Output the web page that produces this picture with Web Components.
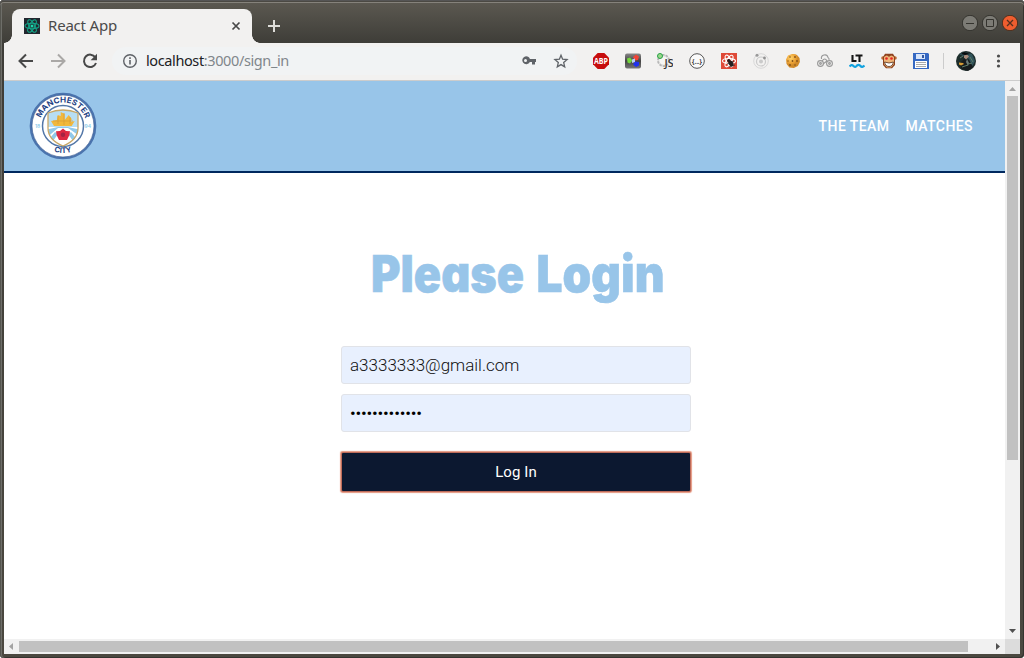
<!DOCTYPE html>
<html lang="en">
<head>
<meta charset="utf-8">
<title>React App</title>
<style>
html,body{margin:0;height:100%;overflow:hidden;background:#fff}
</style>
</head>
<body>
<browser-window></browser-window>
<script>
const define = (name, html) => customElements.define(name, class extends HTMLElement {
  constructor() {
    super();
    const t = document.createElement('template');
    t.innerHTML = html;
    this.attachShadow({mode: 'open'}).append(t.content.cloneNode(true));
  }
});

const ICONS = {
  back: [18, '<g fill="none" stroke="#484848" stroke-width="2"><path d="M16 9H3M9 2.500 2.500 9 9 15.500"/></g>'],
  forward: [18, '<g fill="none" stroke="#aaa8a6" stroke-width="2"><path d="M2 9h13M9 2.500 15.500 9 9 15.500"/></g>'],
  reload: [18, '<path d="M14.300 5.300A6.200 6.200 0 1 0 15 11" fill="none" stroke="#484848" stroke-width="2"/><path d="M16 1.800v6.400H9.600z" fill="#484848"/>'],
  info: [16, '<circle cx="8" cy="8" r="6.300" fill="none" stroke="#5f6368" stroke-width="1.400"/><path d="M7.200 7h1.600v4.500H7.200zM7.200 4.200h1.600v1.700H7.200z" fill="#5f6368"/>'],
  key: [16, '<path fill="#5f6368" fill-rule="evenodd" d="M5 3.300a4 4 0 0 1 3.900 2.800H15v3h-1V11.500h-3V9.100H8.900A4 4 0 1 1 5 3.300zm-.5 2.800a1.500 1.500 0 1 0 0 3 1.500 1.500 0 0 0 0-3z"/>'],
  star: [16, '<path fill="none" stroke="#5f6368" stroke-width="1.300" d="m8 2.200 1.600 4 4.500.4-3.400 3 1 4.300L8 11.600l-3.700 2.300 1-4.300-3.400-3 4.500-.4z"/>'],
  abp: [16, '<path d="M4.700 0h6.600L16 4.700v6.600L11.300 16H4.700L0 11.300V4.700z" fill="#c70d0d"/><text x="8" y="11" text-anchor="middle" textLength="14" lengthAdjust="spacingAndGlyphs" font-family="Open Sans,sans-serif" font-weight="700" font-size="8" fill="#fff">ABP</text>'],
  swatch: [16, '<defs><linearGradient id="g" x2="0" y2="1"><stop stop-color="#888"/><stop offset=".5" stop-color="#444"/><stop offset="1" stop-color="#777"/></linearGradient></defs><rect y=".5" width="16" height="15" rx="2" fill="url(#g)"/><path d="m11 1.500 3 2-1 3.500-3 .5-2-3.500z" fill="#f04436"/><path d="m2 5.500 3-1 2.500 3-2.500 3-2.500-1z" fill="#75d83e"/><path d="m10 8.500 4 .5v3.500l-3 1.500-3-2.500z" fill="#2032ef"/><path d="m7 6.500 3-1v3.500l-3 1z" fill="#bacbf7"/>'],
  js: [16, '<circle cx="6.500" cy="7.500" r="5.300" fill="none" stroke="#b4b4b4" stroke-width="2.200" stroke-dasharray="2.300 1"/><circle cx="6.500" cy="7.500" r="4.700" fill="#f6f6f4" stroke="#c4c4c4" stroke-width=".6"/><circle cx="3" cy="3" r="2.500" fill="#9cd88c" stroke="#27a147"/><text x="7.500" y="14" font-family="Open Sans,sans-serif" font-weight="600" font-size="10" textLength="9" lengthAdjust="spacingAndGlyphs" fill="#333">JS</text>'],
  json: [16, '<circle cx="8" cy="8" r="7.300" fill="#fafafa" stroke="#555"/><text x="8" y="10.500" text-anchor="middle" font-family="Open Sans,sans-serif" font-size="7.500" font-weight="700" textLength="10" lengthAdjust="spacingAndGlyphs" fill="#333">{...}</text>'],
  react: [16, '<path d="M0 0h16v16H0z" fill="#df4937"/><g fill="none" stroke="#fff" stroke-width="1.100"><ellipse cx="8" cy="8" rx="6.500" ry="2.500"/><ellipse cx="8" cy="8" rx="6.500" ry="2.500" transform="rotate(60 8 8)"/><ellipse cx="8" cy="8" rx="6.500" ry="2.500" transform="rotate(120 8 8)"/></g><ellipse cx="10" cy="10.500" rx="2.300" ry="3" transform="rotate(-35 10 10.500)" fill="#252020"/><circle cx="7.700" cy="7.500" r="1.500" fill="#252020"/><path d="m6 11 7-3M8 14l6-2" stroke="#252020" stroke-width=".7"/>'],
  orbit: [16, '<circle cx="8" cy="8" r="7.300" fill="none" stroke="#d8d8d8"/><circle cx="8" cy="8.500" r="4.500" fill="none" stroke="#cacaca" stroke-width="1.200"/><circle cx="8" cy="8.500" r="2" fill="#cacaca"/><circle cx="4" cy="2.200" r="1.500" fill="#999"/><circle cx="11.500" cy="5" r="1.400" fill="#929292"/>'],
  cookie: [16, '<defs><radialGradient id="g" cx=".35" cy=".3"><stop stop-color="#ffd36c"/><stop offset=".7" stop-color="#eca235"/><stop offset="1" stop-color="#d08a2a"/></radialGradient></defs><path d="M7 1q3-.5 5 1l2.500 3 .4 4-2 4-4 2-4.500-.4L1.600 11 1 6.500l2-4z" fill="url(#g)"/><g fill="#81501b"><circle cx="5" cy="4" r=".8"/><circle cx="10" cy="4" r=".9"/><circle cx="3" cy="8" r=".7"/><circle cx="7.500" cy="8" r=".9"/><circle cx="12" cy="8" r=".9"/><circle cx="5" cy="12" r=".9"/><circle cx="10" cy="12" r=".8"/></g>'],
  clouds: [16, '<g fill="none" stroke="#999" stroke-width="1.100"><path d="M4.500 6a3.300 3.300 0 0 1 6.500-1.500q1.500 1 1 2.500"/><circle cx="3.500" cy="10.500" r="2.900"/><circle cx="12.500" cy="10.500" r="2.900"/><path d="M5 8q3-4 5 0l-4 3"/><circle cx="3.500" cy="10.500" r=".9"/><circle cx="12.500" cy="10.500" r=".9"/></g>'],
  lt: [16, '<path d="M3.500 2v6h4M6.500 2.500h7M10.500 2.500V9" fill="none" stroke="#151515" stroke-width="2.100"/><path d="M.5 13.500q2-2.500 4-.5t3.500-.5q2-1.500 3.500.5t4-.5" fill="none" stroke="#12a2df" stroke-width="2.200"/>'],
  monkey: [16, '<circle cx="2" cy="5" r="1.800" fill="#ba6b33"/><circle cx="14" cy="5" r="1.800" fill="#ba6b33"/><path d="M2 4 4 .7h8L14 4v8l-3 3.300H5L2 12z" fill="#8d421f"/><path d="M3 4q3-3 5 0 2-3 5 0v7l-3 3.500H6L3 11z" fill="#efb477"/><circle cx="5.500" cy="5.500" r="1.300" fill="#e82625"/><circle cx="10.500" cy="5.500" r="1.300" fill="#e82625"/><path d="M3.500 9q4.500 2 9 0-1 4.500-4.500 4.500T3.500 9z" fill="#fff" stroke="#53301e" stroke-width=".8"/>'],
  floppy: [16, '<path d="M0 0h15l1 1v15H0z" fill="#3568c2"/><path d="M3 1h9v5H3z" fill="#d7e5fa"/><path d="M9 2h2v3H9z" fill="#3157a1"/><path d="M2 8h12v7H2z" fill="#fff"/><path d="M3 9.500h10M3 11.500h10M3 13.500h10" stroke="#aaa"/>'],
  avatar: [20, '<circle cx="10" cy="10" r="10" fill="#1d2d2b"/><path d="m3 3 5-2 8 2 3 7-3 6-3-8z" fill="#31545b"/><path d="M3 13 8 8l5 1 4 7-5 4-6-2z" fill="#161b1d"/><path d="m8 4.500 3-1 2 2-3 3-2-2z" fill="#aa8c7c"/><path d="m3 11.500 4 .5 1 1-3 1.500-2-1z" fill="#d59c36"/><path d="m11 8 2 4-1 3-2-4z" fill="#6c7b79"/><path d="m5 3 3-2 6 2-5 1z" fill="#080b0c"/><path d="m12 13 4-1M6 16l6-2M14 6l3 5M4 7l3-2" stroke="#5d7b68"/>'],
  dots: [16, '<g fill="#4b4b4b"><circle cx="8.500" cy="3" r="1.600"/><circle cx="8.500" cy="8" r="1.600"/><circle cx="8.500" cy="13" r="1.600"/></g>'],
  favicon: [16, '<path d="M0 0h16v16H0z" fill="#22272f"/><g fill="none" stroke="#13a487" stroke-width="1.100"><ellipse cx="8" cy="8" rx="7" ry="2.700"/><ellipse cx="8" cy="8" rx="7" ry="2.700" transform="rotate(60 8 8)"/><ellipse cx="8" cy="8" rx="7" ry="2.700" transform="rotate(120 8 8)"/></g><circle cx="8" cy="8" r="1.500" fill="#1bd8ad"/>'],
  close: [10, '<path d="m1.500 1.500 7 7m0-7-7 7" stroke="#484848" stroke-width="1.700"/>'],
  plus: [14, '<path d="M7 1v12M1 7h12" stroke="#deddd9" stroke-width="2"/>']
};
customElements.define('ui-icon', class extends HTMLElement {
  connectedCallback() {
    const [s, body] = ICONS[this.getAttribute('name')];
    this.attachShadow({mode: 'open'}).innerHTML =
      `<style>:host{display:flex;align-items:center;justify-content:center;flex:none}svg{display:block}</style><svg width="${s}" height="${s}" viewBox="0 0 ${s} ${s}">${body}</svg>`;
  }
});

define('window-controls', `<style>:host{display:flex;gap:4px}svg{display:block}</style>
<svg width="16" height="16"><circle cx="8" cy="8" r="7.700" fill="#7c7b75" stroke="#34332e"/><path d="M4 8.500h8" stroke="#34332e"/></svg>
<svg width="16" height="16"><circle cx="8" cy="8" r="7.700" fill="#7c7b75" stroke="#34332e"/><path d="M4.500 4.500h7v7h-7z" fill="none" stroke="#34332e"/></svg>
<svg width="16" height="16"><circle cx="8" cy="8" r="7.700" fill="#ef5d2f" stroke="#49301f"/><path d="m5 5 6 6m0-6-6 6" stroke="#54301f" stroke-width="1.300"/></svg>`);

define('tab-strip', `<style>
:host{display:flex;height:43px;box-sizing:border-box;padding:9px 2px 0 8px;position:relative}
.tab{position:relative;width:240px;box-sizing:border-box;height:34px;background:#f2f1f0;border-radius:8px 8px 0 0;display:flex;align-items:center;padding:0 11px 0 12px;font:15px/20px "Noto Sans",sans-serif;color:#4a4a4a}
.tab:before,.tab:after{content:"";position:absolute;bottom:0;width:8px;height:8px}
.tab:before{left:-8px;background:radial-gradient(circle at 0 0,transparent 7.500px,#f2f1f0 8px)}
.tab:after{right:-8px;background:radial-gradient(circle at 100% 0,transparent 7.500px,#f2f1f0 8px)}
.t{margin-left:8px;flex:1;letter-spacing:-.2px;padding-bottom:2px}
.plus{margin:0 auto 0 15px;height:34px}
window-controls{margin-top:6px}
</style><div class="tab"><ui-icon name="favicon"></ui-icon><span class="t">React App</span><ui-icon name="close"></ui-icon></div><ui-icon class="plus" name="plus"></ui-icon><window-controls></window-controls>`);

define('tool-bar', `<style>
:host{display:flex;align-items:center;height:38px;box-sizing:border-box;background:#f2f1f0;border-bottom:1px solid #ccc;padding:0 6px 1px}
ui-icon{width:32px}
.pill{margin:0 8px 0 6px;width:465px;height:28px;border-radius:14px;background:#f1f3f4;display:flex;align-items:center;font:14.500px/20px "Noto Sans",sans-serif;color:#80868b}
.pill ui-icon:first-child{width:16px;margin:0 8px 0 10px}
.url{flex:1;letter-spacing:-.39px;padding-bottom:2px}b{font-weight:400;color:#202124}
.sep{width:1px;height:16px;background:#ccc;margin:0 6px}
</style><ui-icon name="back"></ui-icon><ui-icon name="forward"></ui-icon><ui-icon name="reload"></ui-icon>
<div class="pill"><ui-icon name="info"></ui-icon><span class="url"><b>localhost</b>:3000/sign_in</span><ui-icon name="key"></ui-icon><ui-icon name="star"></ui-icon></div>
${['abp','swatch','js','json','react','orbit','cookie','clouds','lt','monkey','floppy'].map(n => `<ui-icon name="${n}"></ui-icon>`).join('')}
<span class="sep"></span><ui-icon name="avatar"></ui-icon><ui-icon name="dots"></ui-icon>`);

define('club-crest', `<style>:host{display:block}svg{display:block}</style>
<svg width="68" height="68" viewBox="0 0 68 68">
<defs><path id="top" d="M10.500 34a23.500 23.500 0 0 1 47 0"/><path id="bot" d="M7 34a27 27 0 0 0 54 0"/><clipPath id="c"><path d="M19 21q15-6 30 0v15q0 12-15 18-15-6-15-18z"/></clipPath></defs>
<circle cx="34" cy="34" r="32.200" fill="#fff" stroke="#4b74ae" stroke-width="2.300"/><circle cx="34" cy="34" r="31" fill="none" stroke="#284c86" stroke-width=".6"/>
<circle cx="34" cy="34" r="20.500" fill="#fff" stroke="#5377a8" stroke-width="1.500"/>
<g clip-path="url(#c)"><path d="M16 14h36v22H16z" fill="#b7def4"/><path d="M16 35h36v22H16z" fill="#fff"/><path d="m16 38 13-3h10l13 3v7L39 36H29L16 47zm0 14 10-12 3 2-10 14zm36 0L42 40l-3 2 10 14z" fill="#91c9ea"/></g>
<path d="M19 21q15-6 30 0v15q0 12-15 18-15-6-15-18z" fill="none" stroke="#c9a766" stroke-width="1.300"/>
<path d="m22 29 6-1 .7-5 3 1v-4l4 2v6l4-5 3 4-1 3 4-1-3 5H25z" fill="#f1b83c"/><path d="M24 29h20M29 24v8M35 21v12M41 25v7" stroke="#d59b34" stroke-width=".7"/>
<path d="m34 36.500 3 2.500 4 .3-.7 4L38 48h-8l-2.300-4.700-.7-4 4-.3z" fill="#dd2943"/><circle cx="34" cy="42.800" r="2.200" fill="#a52343"/>
<g fill="#1f4385" font-family="Inter,sans-serif" font-weight="700"><text font-size="7.800" textLength="58" lengthAdjust="spacingAndGlyphs"><textPath href="#top" startOffset="7.900">MANCHESTER</textPath></text><text font-size="7.600" text-anchor="middle"><textPath href="#bot" startOffset="50%">CITY</textPath></text></g>
<g fill="#8ccbea" font-family="Inter,sans-serif" font-weight="600" font-size="5"><text x="6" y="36">18</text><text x="55.500" y="36">94</text></g>
</svg>`);

define('site-header', `<style>
:host{display:flex;height:92px;box-sizing:border-box;background:#98c5e9;border-bottom:2px solid #00285e;align-items:center;justify-content:space-between;padding:0 32px 0 25px}
nav{display:flex;gap:16px;font:500 14px/20px Roboto,sans-serif;color:#fff;letter-spacing:.42px}
</style><club-crest></club-crest><nav><span>THE TEAM</span><span>MATCHES</span></nav>`);

define('text-field', `<style>:host{display:flex;align-items:center;box-sizing:border-box;width:350px;height:38px;border:1px solid #e1e3e8;border-radius:3px;background:#e8f0fe;padding:0 8px 0 8.500px;color:#111;font:300 17px/20px Roboto,sans-serif}</style><slot></slot>`);
define('submit-button', `<style>:host{display:flex;align-items:center;justify-content:center;box-sizing:border-box;width:348px;height:38px;padding:0 0 0 1px;border-radius:1px;background:#0c1830;color:#fff;font:400 15px/20px Roboto,sans-serif;letter-spacing:.08px;box-shadow:0 0 0 1px #bd6b5a,0 0 1px 1.500px #e59780}</style><slot></slot>`);

define('login-page', `<style>
:host{display:flex;flex-direction:column;align-items:center;box-sizing:border-box;padding:67px 0 0 23px}
.h{display:block;width:320px;height:70px;overflow:visible}
form{display:flex;flex-direction:column;gap:10px;margin:36px 0 0 -1px}
submit-button{margin:11px 1px 0}
.pw{font-weight:400;color:#000;letter-spacing:-.22px}
</style>
<svg class="h" viewBox="0 0 320 70"><text y="52" font-family="Inter,sans-serif" font-size="51" font-weight="900" style="font-feature-settings:'cv11'" fill="#98c5e9" stroke="#98c5e9" stroke-width=".6"><tspan x="15" textLength="153" lengthAdjust="spacingAndGlyphs">Please</tspan> <tspan x="180.500" textLength="128" lengthAdjust="spacingAndGlyphs">Login</tspan></text></svg>
<form><text-field>a3333333@gmail.com</text-field><text-field class="pw">•••••••••••••</text-field><submit-button>Log In</submit-button></form>`);

define('scroll-y', `<style>:host{display:flex;flex-direction:column;background:#f1f1f1;width:15px;align-items:center}i{width:11px;height:364px;background:#c1c1c1}svg{display:block}.g{flex:1}</style><svg width="15" height="15"><path d="M4 10h7L7.500 6z" fill="#a3a3a3"/></svg><i></i><span class="g"></span><svg width="15" height="16"><path d="M4 6h7l-3.500 4z" fill="#505050"/></svg>`);
define('scroll-x', `<style>:host{display:flex;background:#f1f1f1;height:15px;align-items:center}i{width:949px;height:11px;background:#c1c1c1}svg{display:block}.g{flex:1}</style><svg width="15" height="15"><path d="M9 4v7L5 7.500z" fill="#a3a3a3"/></svg><i></i><span class="g"></span><svg width="15" height="15"><path d="M6 4v7l4-3.500z" fill="#505050"/></svg>`);

define('browser-window', `<style>
:host{display:flex;flex-direction:column;width:1024px;height:658px;box-sizing:border-box;padding:0 4px 4px;background:linear-gradient(#5d5a52,#3e3d38 43px,#4b4840 100%);border-radius:4px;overflow:hidden;box-shadow:inset 0 1px #555,inset 0 2px #4b4943,inset 0 3px #85827b,inset 1px 0 #55554f,inset 2px 0 #6e6e69,inset -1px -1px #35342f}
.view{display:grid;grid-template:558px 15px/1001px 15px;background:#fff}
.doc{overflow:hidden}.corner{background:#dcdcdc}
</style><tab-strip></tab-strip><tool-bar></tool-bar>
<div class="view"><div class="doc"><site-header></site-header><login-page></login-page></div><scroll-y></scroll-y><scroll-x></scroll-x><div class="corner"></div></div>`);
</script>
</body>
</html>
